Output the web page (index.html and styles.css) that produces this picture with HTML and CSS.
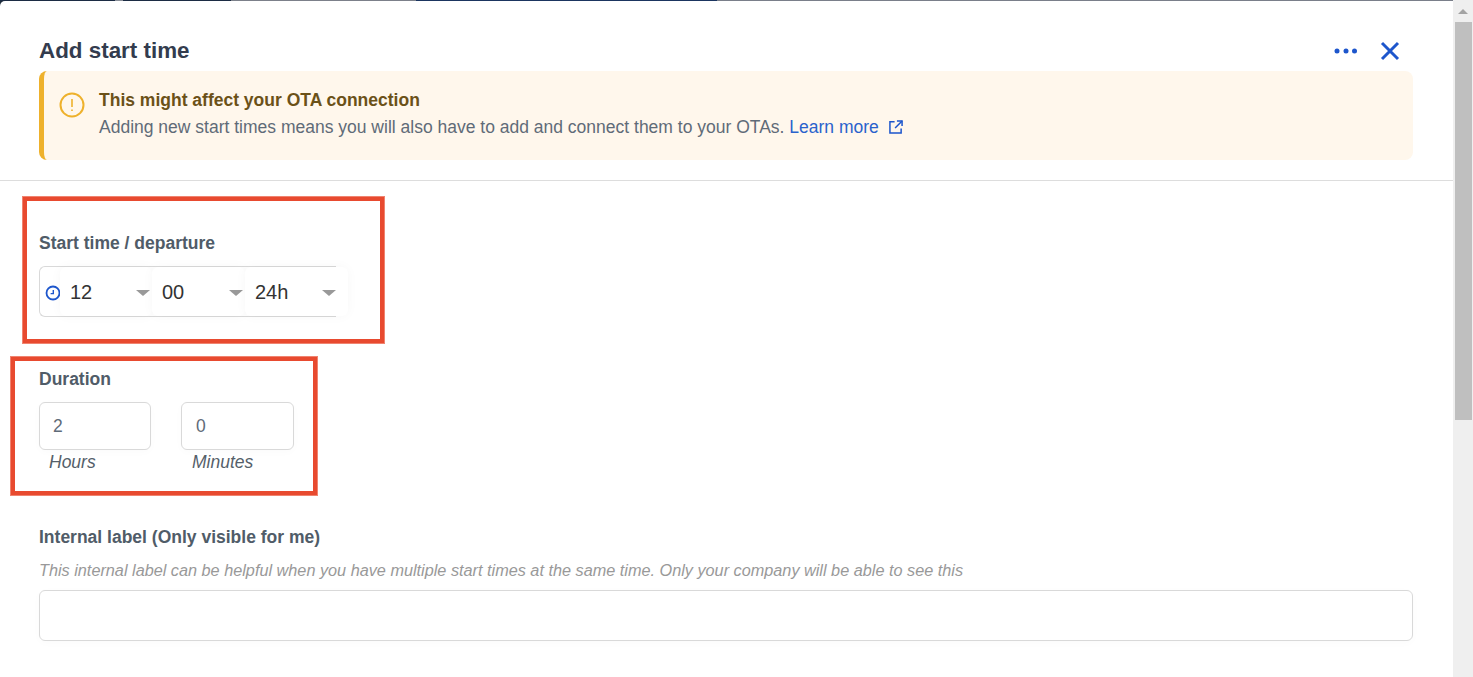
FILE: index.html
```html
<!DOCTYPE html>
<html lang="en">
<head>
<meta charset="utf-8">
<title>Add start time</title>
<link rel="stylesheet" href="styles.css">
</head>
<body>
<div class="window">
  <div class="main">
    <div class="backdrop-strip"></div>
    <div class="modal">
      <header class="head">
        <div class="title-row">
          <h1 class="title">Add start time</h1>
          <div class="actions">
            <svg class="dots" width="24" height="6" viewBox="0 0 24 6"><circle cx="3" cy="3" r="2.5"/><circle cx="12" cy="3" r="2.5"/><circle cx="20.5" cy="3" r="2.5"/></svg>
            <svg class="close" width="20" height="20" viewBox="0 0 20 20"><path d="M2 2 L18 18 M18 2 L2 18"/></svg>
          </div>
        </div>
        <div class="alert">
          <svg class="alert-icon" width="26" height="26" viewBox="0 0 26 26"><circle cx="13" cy="13" r="11.5"/><path d="M13 7 V15"/><path d="M13 17.5 V19"/></svg>
          <div class="alert-body">
            <div class="alert-title">This might affect your OTA connection</div>
            <div class="alert-text">Adding new start times means you will also have to add and connect them to your OTAs. <a class="link" href="#">Learn more<svg class="ext" width="14" height="14" viewBox="0 0 15 15"><path d="M6 2 H1 V14 H13 V9"/><path d="M8.5 1 H14 V6.5"/><path d="M14 1 L6.5 8.5"/></svg></a></div>
          </div>
        </div>
      </header>
      <div class="content">
        <section class="start">
          <div class="label">Start time / departure</div>
          <div class="time-field">
            <svg class="clock" width="16" height="16" viewBox="0 0 16 16"><circle cx="8" cy="8" r="6.5"/><path d="M8.3 5 V8.6 H5.6"/></svg>
            <div class="sel sel-first"><span>12</span><i class="caret"></i></div>
            <div class="sel"><span>00</span><i class="caret"></i></div>
            <div class="sel sel-last"><span>24h</span><i class="caret"></i></div>
          </div>
        </section>
        <section class="duration">
          <div class="label">Duration</div>
          <div class="dur-row">
            <div class="dur-col dur-hours">
              <div class="box">2</div>
              <div class="hint">Hours</div>
            </div>
            <div class="dur-col dur-mins">
              <div class="box">0</div>
              <div class="hint">Minutes</div>
            </div>
          </div>
        </section>
        <section class="internal">
          <div class="label">Internal label (Only visible for me)</div>
          <div class="help">This internal label can be helpful when you have multiple start times at the same time. Only your company will be able to see this</div>
          <div class="text-input"></div>
        </section>
      </div>
    </div>
    <div class="mark mark-start"></div>
    <div class="mark mark-duration"></div>
  </div>
  <div class="scrollbar">
    <div class="sb-up"><i class="sb-arrow"></i></div>
    <div class="sb-thumb"></div>
  </div>
</div>
</body>
</html>
```
FILE: styles.css
```css
* { box-sizing: border-box; }
html, body { margin: 0; height: 100%; overflow: hidden; }
body { font-family: "Liberation Sans", Arial, sans-serif; background: #fff; color: #5a6570; }
.window { display: flex; width: 1473px; height: 677px; }
.main { position: relative; flex: 1; min-width: 0; display: flex; flex-direction: column; background: #1f2d3d; overflow: hidden; }
.backdrop-strip { height: 1px; flex: none; background: linear-gradient(90deg, #1c2c44 0 115px, #8a8f98 115px 123px, #1c2c44 123px 231px, #7c808a 231px 416px, #1b3560 416px 717px, #7a7f8a 717px 100%); }
.modal { flex: 1; background: #fff; border-radius: 5px 0 0 0; }
.head { height: 180px; padding: 0 40px 0 39px; border-bottom: 1px solid #ddd; }
.title-row { display: flex; justify-content: space-between; align-items: center; height: 70px; padding-top: 29px; padding-bottom: 0; }
.title { margin: 0; font-size: 22.4px; line-height: 30px; font-weight: 700; color: #333c4e; }
.actions { display: flex; align-items: center; gap: 22px; margin-right: 13px; }
.dots { fill: #1d56cc; }
.close { fill: none; stroke: #1d56cc; stroke-width: 3; }
.alert { display: flex; height: 89px; background: #fff7ec; border-left: 5px solid #eeb12c; border-radius: 8px; padding: 19px 0 0 15px; }
.alert-icon { flex: none; margin-top: 2px; fill: none; stroke: #eeb12c; stroke-width: 2; }
.alert-icon path { stroke-width: 1.6; }
.alert-body { margin-left: 14px; }
.alert-title { font-size: 17.5px; line-height: 20px; font-weight: 700; color: #6b5118; }
.alert-text { font-size: 17.5px; line-height: 20px; margin-top: 7px; color: #5f6b78; }
.link { color: #2a62cc; text-decoration: none; }
.ext { margin-left: 10px; vertical-align: -1px; fill: none; stroke: #1d56cc; stroke-width: 1.6; }
.content { padding: 0 40px 0 39px; }
.label { font-size: 17.5px; line-height: 20px; font-weight: 700; color: #505c68; }
.start { padding-top: 52px; }
.time-field { display: flex; align-items: center; width: 297px; height: 51px; margin-top: 13px; border: 1px solid #d9d9d9; border-right: 0; border-radius: 6px 0 0 6px; }
.clock { flex: none; margin: 2px 0 0 5px; fill: none; stroke: #1d56cc; stroke-width: 1.8; }
.clock path { stroke-width: 1.4; }
.sel { flex: none; width: 93px; height: 49px; display: flex; align-items: center; justify-content: space-between; padding: 2px 0 0 10px; background: #fff; box-shadow: 0 0 12px rgba(0,0,0,.035); font-size: 20px; color: #333; border-radius: 6px; }
.sel-first { width: 92px; margin-left: -1px; padding-left: 10px; }
.sel-last { width: 103px; padding-right: 10px; }
.caret { width: 0; height: 0; margin-right: 2px; border-left: 7px solid transparent; border-right: 7px solid transparent; border-top: 6px solid #999; }
.duration { padding-top: 52px; }
.dur-row { display: flex; margin-top: 13px; gap: 30px; }
.dur-hours { width: 112px; }
.dur-mins { width: 113px; }
.box { height: 48px; border: 1px solid #d9d9d9; border-radius: 6px; background: #fff; padding-left: 14px; font-size: 17.5px; line-height: 46px; color: #5f6b78; box-shadow: 0 2px 8px rgba(0,0,0,.02); }
.dur-hours .box { padding-left: 13px; }
.hint { margin-top: 2px; padding-left: 10px; font-size: 17.5px; line-height: 20px; font-style: italic; color: #555f6a; }
.dur-mins .hint { padding-left: 11px; }
.internal { padding-top: 55px; }
.help { margin-top: 13px; font-size: 16.25px; line-height: 20px; font-style: italic; color: #999; }
.text-input { height: 51px; margin-top: 10px; border: 1px solid #d9d9d9; border-radius: 6px; box-shadow: 0 2px 8px rgba(0,0,0,.02); }
.mark { position: absolute; border: 5px solid #e84a2f; outline: 1px solid #f0836f; outline-offset: -1px; }
.mark-start { left: 22px; top: 196px; width: 363px; height: 148px; }
.mark-duration { left: 10px; top: 356px; width: 308px; height: 140px; }
.scrollbar { flex: none; width: 20px; background: #efefef; padding-left: 2px; display: flex; flex-direction: column; }
.sb-up { height: 22px; display: flex; align-items: center; justify-content: center; padding-right: 2px; }
.sb-arrow { width: 0; height: 0; border-left: 5px solid transparent; border-right: 5px solid transparent; border-bottom: 5px solid #a3a3a3; }
.sb-thumb { width: 17px; height: 398px; background: #bfbfbf; }
```
